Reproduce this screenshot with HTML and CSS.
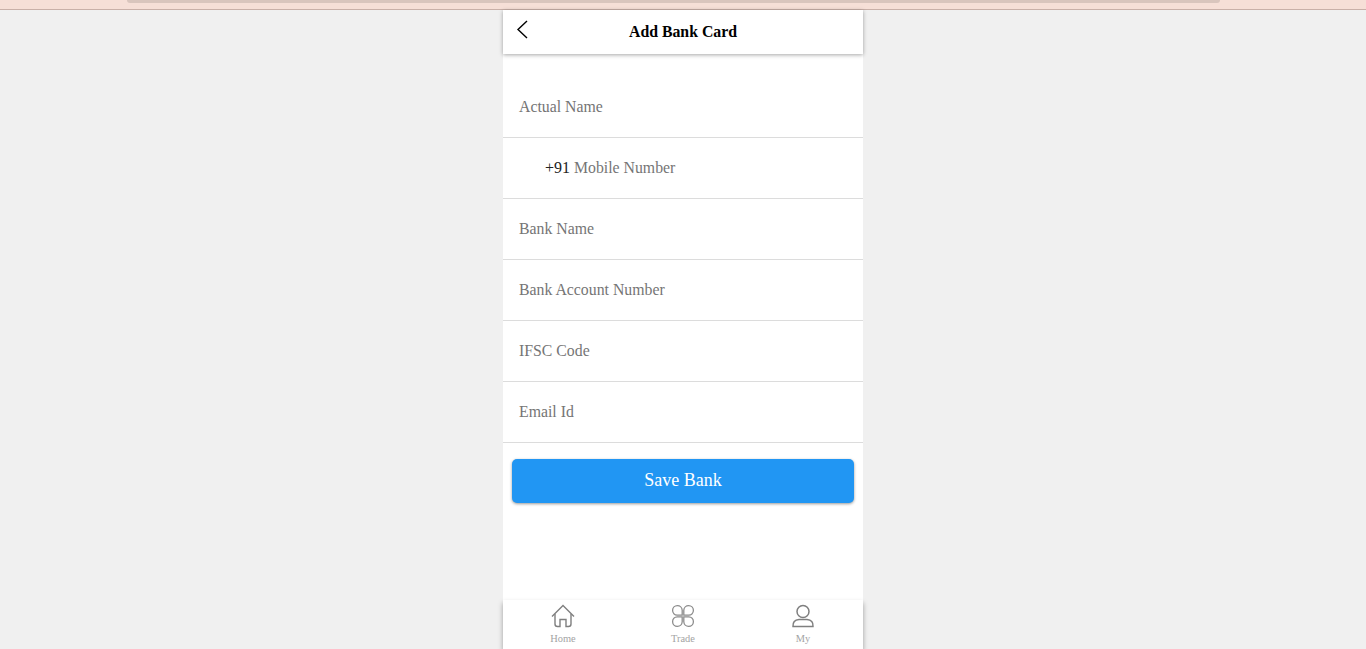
FILE: index.html
```html
<!DOCTYPE html>
<html lang="en">
<head>
    <meta charset="UTF-8">
    <meta name="viewport" content="width=device-width, initial-scale=1.0">
    <title>Add Bank Card</title>
    <link rel="stylesheet" href="styles.css">
</head>
<body>
    <div class="top-strip">
        <div class="top-pill"></div>
    </div>
    <div class="page">
        <div class="header">
            <svg class="back-icon" width="12" height="20" viewBox="0 0 12 20">
                <path d="M11 1 L2 9.500 L11 18" fill="none" stroke="#000" stroke-width="1.400"/>
            </svg>
            <h1 class="title">Add Bank Card</h1>
        </div>
        <div class="form">
            <div class="field">Actual Name</div>
            <div class="field field-phone"><span class="prefix">+91</span> Mobile Number</div>
            <div class="field">Bank Name</div>
            <div class="field">Bank Account Number</div>
            <div class="field">IFSC Code</div>
            <div class="field">Email Id</div>
        </div>
        <div class="save-wrap">
            <button class="save-btn">Save Bank</button>
        </div>
        <div class="tabbar">
            <div class="tab">
                <svg width="24" height="24" viewBox="0 0 24 24" fill="none" stroke="#7f7f7f" stroke-width="1.400">
                    <path d="M1 12.500 L12 1.500 L23 12.500"/>
                    <path d="M4 10 V20 Q4 22.500 6.500 22.500 H9 V15.500 H15 V22.500 H17.500 Q20 22.500 20 20 V10"/>
                </svg>
                <span>Home</span>
            </div>
            <div class="tab">
                <svg width="24" height="24" viewBox="0 0 24 24" fill="none" stroke="#8c8c8c" stroke-width="1.300">
                    <path d="M11.200 11.200 H6.200 A4.800 4.800 0 1 1 11.200 6.200 Z"/>
                    <path d="M12.800 11.200 V6.200 A4.800 4.800 0 1 1 17.800 11.200 Z"/>
                    <path d="M11.200 12.800 V17.800 A4.800 4.800 0 1 1 6.200 12.800 Z"/>
                    <path d="M12.800 12.800 H17.800 A4.800 4.800 0 1 1 12.800 17.800 Z"/>
                </svg>
                <span>Trade</span>
            </div>
            <div class="tab">
                <svg width="24" height="24" viewBox="0 0 24 24" fill="none" stroke="#7f7f7f" stroke-width="1.500">
                    <circle cx="12" cy="7.500" r="6"/>
                    <path d="M2 22.500 Q1.500 16 8 15.500 H16 Q22.500 16 22 22.500 Z"/>
                </svg>
                <span>My</span>
            </div>
        </div>
    </div>
</body>
</html>
```
FILE: styles.css
```css
html, body {
    height: 100%;
}
body {
    margin: 0;
    background-color: #f0f0f0;
    font-family: "Liberation Serif", "Times New Roman", serif;
    overflow: hidden;
}
.top-strip {
    height: 9px;
    padding-left: 127px;
    background-color: #f6dfd7;
    border-bottom: 1px solid #c9b0a8;
    display: flex;
}
.top-pill {
    width: 1093px;
    height: 3px;
    background-color: #d9c5bd;
    border-radius: 0 0 8px 8px;
}
.page {
    width: 360px;
    height: 639px;
    margin: 0 auto;
    background-color: #fff;
    display: flex;
    flex-direction: column;
}
.header {
    height: 44px;
    display: flex;
    align-items: center;
    justify-content: center;
    background-color: #fff;
    box-shadow: 0 1px 4px rgba(0, 0, 0, 0.35);
    position: relative;
}
.back-icon {
    position: absolute;
    left: 13px;
    top: 10px;
}
.title {
    margin: 0;
    font-size: 15.800px;
    font-weight: bold;
    color: #000;
}
.form {
    margin-top: 23px;
}
.field {
    height: 60px;
    line-height: 60px;
    padding-left: 16px;
    border-bottom: 1px solid #dcdcdc;
    font-size: 15.800px;
    color: #757575;
}
.field-phone {
    padding-left: 42px;
}
.prefix {
    font-size: 16px;
    color: #222;
}
.save-wrap {
    padding: 16px 9px 0;
}
.save-btn {
    display: block;
    width: 100%;
    height: 44px;
    padding-bottom: 3px;
    border: none;
    border-radius: 5px;
    background-color: #2196f3;
    color: #fff;
    font-family: inherit;
    font-size: 18px;
    box-shadow: 0 1px 3px rgba(0, 0, 0, 0.4);
}
.tabbar {
    margin-top: auto;
    height: 49px;
    display: flex;
    background-color: #fff;
    box-shadow: 0 3px 5px rgba(0, 0, 0, 0.35);
}
.tab {
    flex: 1;
    display: flex;
    flex-direction: column;
    align-items: center;
    padding-top: 4px;
    font-size: 10.400px;
    color: #a3a3a3;
}
.tab span {
    line-height: 14px;
    margin-top: 4px;
}
```
